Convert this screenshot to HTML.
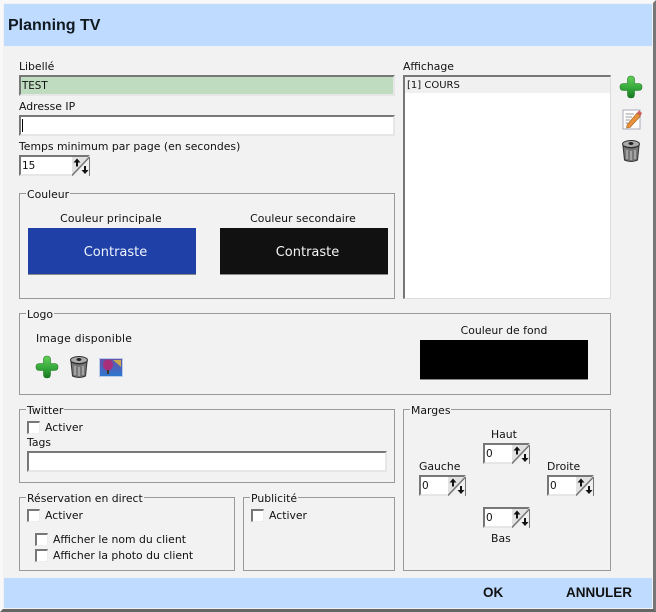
<!DOCTYPE html>
<html><head><meta charset="utf-8"><style>
html,body{margin:0;padding:0}
body{width:656px;height:612px;position:relative;overflow:hidden;background:#f2f2f2;font-family:"DejaVu Sans","Liberation Sans",sans-serif;font-size:10.85px;color:#111}
div{position:absolute;box-sizing:border-box;white-space:nowrap}
.t{line-height:16px;height:14px}
.bar{background:#bfdbff;left:4px;width:648px}
.inp{background:#fff;border:2px solid #777;border-right:2px solid #e6e6e6;border-bottom:2px solid #e6e6e6;line-height:19px;padding-left:1px;font-size:10.3px}
.grp{border:1px solid #999}
.lg{background:#f2f2f2;line-height:14px;height:12px;padding:0 1px}
.cb{width:13px;height:13px;background:#fff;border:1px solid #eee;border-top:2px solid #777;border-left:2px solid #777}
.sp{height:21px;width:47px;background:#fff;border:2px solid #777;border-right:2px solid #e6e6e6;border-bottom:2px solid #e6e6e6;font-size:10.5px;line-height:19px;padding-left:1px}
.sp svg{position:absolute;right:-2px;top:0}
svg.i{position:absolute}
.col{text-align:center;line-height:49px;font-size:13px;height:47px;width:168px;padding-left:7px;color:#f0f4ff;border-bottom:1px solid #888}
.btn{font:bold 13.5px/16px "Liberation Sans",sans-serif;color:#111;top:585px}
</style></head><body>
<div style="left:0;top:0;width:656px;height:612px;border:3px solid #fff;border-right:3px solid #777;border-bottom:3px solid #666;border-top-color:#f8f8f8;border-left-color:#f8f8f8"></div>
<div class="bar" style="top:4px;height:42px;font:bold 16px/44px 'Liberation Sans',sans-serif;padding-left:4px;color:#101820">Planning TV</div>
<div class="bar" style="top:578px;height:30px"></div>
<div class="btn" style="left:483px">OK</div>
<div class="btn" style="left:566px">ANNULER</div>

<div class="t" style="left:19px;top:59px">Libellé</div>
<div class="inp" style="left:19px;top:75px;width:376px;height:21px;background:#c0dcc0">TEST</div>
<div class="t" style="left:19px;top:99px">Adresse IP</div>
<div class="inp" style="left:19px;top:115px;width:376px;height:21px"><div style="left:1px;top:2px;width:1px;height:13px;background:#000"></div></div>
<div class="t" style="left:19px;top:139px">Temps minimum par page (en secondes)</div>
<div class="sp" style="left:19px;top:155px;width:71px">15<svg width="18" height="19" viewBox="0 0 18 19"><rect width="18" height="19" fill="#f0f0f0"/><path d="M0 19V0H17Z" fill="#e2e2e2"/><path d="M0 18.500L17 0.500" stroke="#777" stroke-width="1.500"/><path d="M17.500 0V19" stroke="#777"/><path d="M5 1.500L1.500 5.500H4V9.500H6V5.500H8.500ZM13 17L9.500 13H12V9H14V13H16.500Z" fill="#111"/></svg></div>

<div class="t" style="left:403px;top:59px">Affichage</div>
<div style="left:403px;top:75px;width:208px;height:224px;background:#fff;border:2px solid #777;border-right:1px solid #ddd;border-bottom:1px solid #ddd"></div>
<div style="left:405px;top:77px;width:205px;height:16px;background:#f0f0f0;line-height:18px;padding-left:2px;font-size:10px">[1] COURS</div>

<svg class="i" style="left:619px;top:75px" width="24" height="24" viewBox="0 0 24 24"><defs><linearGradient id="g1" x1="0" y1="0" x2="0" y2="1"><stop offset="0" stop-color="#63cf58"/><stop offset=".55" stop-color="#36a83a"/><stop offset="1" stop-color="#17761f"/></linearGradient></defs><path d="M8.500 4.500Q8.500 1 12 1Q15.500 1 15.500 4.500V8.500H19.500Q23 8.500 23 12Q23 15.500 19.500 15.500H15.500V19.500Q15.500 23 12 23Q8.500 23 8.500 19.500V15.500H4.500Q1 15.500 1 12Q1 8.500 4.500 8.500H8.500Z" fill="url(#g1)" stroke="#1f7a25" stroke-width=".6"/></svg>
<svg class="i" style="left:622px;top:108px" width="20" height="22" viewBox="0 0 20 22"><rect x="1" y="2" width="17" height="19" fill="#fff" stroke="#aab"/><path d="M3.500 6H12M3.500 9H10M3.500 12H8M3.500 15H6" stroke="#999"/><path d="M5 17L15 5L18.500 8L8 19.500L4.500 20Z" fill="#e8903a" stroke="#a06020" stroke-width=".6"/><path d="M15 5L17 2.500L20 5L18.500 8Z" fill="#d06060"/></svg>
<svg class="i" style="left:621px;top:139px" width="20" height="24" viewBox="0 0 20 24"><ellipse cx="10" cy="5" rx="8.500" ry="3.500" fill="#aaa" stroke="#333"/><ellipse cx="10" cy="4.500" rx="2.500" ry="1.500" fill="#222"/><path d="M2 7L3.500 21Q10 24 16.500 21L18 7Q10 11 2 7Z" fill="#777" stroke="#333"/><path d="M6 11V20M10 12V21M14 11V20" stroke="#bbb" stroke-width="1.300"/></svg>

<div class="grp" style="left:19px;top:193px;width:376px;height:106px"></div>
<div class="lg" style="left:26px;top:188px">Couleur</div>
<div class="t" style="left:27px;top:211px;width:168px;text-align:center;letter-spacing:.15px">Couleur principale</div>
<div class="t" style="left:219px;top:211px;width:168px;text-align:center;letter-spacing:.05px">Couleur secondaire</div>
<div class="col" style="left:28px;top:228px;background:#1f40a6">Contraste</div>
<div class="col" style="left:220px;top:228px;background:#111;color:#f5f5f5">Contraste</div>

<div class="grp" style="left:19px;top:313px;width:592px;height:82px"></div>
<div class="lg" style="left:26px;top:308px">Logo</div>
<div class="t" style="left:36px;top:331px;letter-spacing:.2px">Image disponible</div>
<div class="t" style="left:420px;top:323px;width:168px;text-align:center">Couleur de fond</div>
<div style="left:420px;top:340px;width:168px;height:40px;background:#000;border-bottom:1px solid #888"></div>
<svg class="i" style="left:35px;top:355px" width="24" height="24" viewBox="0 0 24 24"><defs><linearGradient id="g2" x1="0" y1="0" x2="0" y2="1"><stop offset="0" stop-color="#63cf58"/><stop offset=".55" stop-color="#36a83a"/><stop offset="1" stop-color="#17761f"/></linearGradient></defs><path d="M8.500 4.500Q8.500 1 12 1Q15.500 1 15.500 4.500V8.500H19.500Q23 8.500 23 12Q23 15.500 19.500 15.500H15.500V19.500Q15.500 23 12 23Q8.500 23 8.500 19.500V15.500H4.500Q1 15.500 1 12Q1 8.500 4.500 8.500H8.500Z" fill="url(#g2)" stroke="#1f7a25" stroke-width=".6"/></svg>
<svg class="i" style="left:69px;top:355px" width="20" height="24" viewBox="0 0 20 24"><ellipse cx="10" cy="5" rx="8.500" ry="3.500" fill="#aaa" stroke="#333"/><ellipse cx="10" cy="4.500" rx="2.500" ry="1.500" fill="#222"/><path d="M2 7L3.500 21Q10 24 16.500 21L18 7Q10 11 2 7Z" fill="#777" stroke="#333"/><path d="M6 11V20M10 12V21M14 11V20" stroke="#bbb" stroke-width="1.300"/></svg>
<svg class="i" style="left:99px;top:358px" width="24" height="19" viewBox="0 0 24 19"><defs><linearGradient id="g3" x1="0" y1="0" x2="0" y2="1"><stop offset="0" stop-color="#6a4fa8"/><stop offset="1" stop-color="#2b78d0"/></linearGradient></defs><rect x=".5" y=".5" width="23" height="18" fill="url(#g3)" stroke="#b8cbe8"/><path d="M14 2H22V9Z" fill="#c8a850"/><ellipse cx="9" cy="7" rx="5" ry="5.500" fill="#a8307a"/><path d="M8 12H10V16H8Z" fill="#432"/></svg>

<div class="grp" style="left:19px;top:409px;width:376px;height:74px"></div>
<div class="lg" style="left:26px;top:404px">Twitter</div>
<div class="cb" style="left:27px;top:421px"></div>
<div class="t" style="left:45px;top:420px">Activer</div>
<div class="t" style="left:27px;top:435px">Tags</div>
<div class="inp" style="left:27px;top:451px;width:360px;height:21px"></div>

<div class="grp" style="left:19px;top:497px;width:216px;height:74px"></div>
<div class="lg" style="left:26px;top:492px">Réservation en direct</div>
<div class="cb" style="left:27px;top:509px"></div>
<div class="t" style="left:45px;top:508px">Activer</div>
<div class="cb" style="left:35px;top:533px"></div>
<div class="t" style="left:53px;top:532px">Afficher le nom du client</div>
<div class="cb" style="left:35px;top:549px"></div>
<div class="t" style="left:53px;top:548px">Afficher la photo du client</div>

<div class="grp" style="left:243px;top:497px;width:152px;height:74px"></div>
<div class="lg" style="left:250px;top:492px">Publicité</div>
<div class="cb" style="left:251px;top:509px"></div>
<div class="t" style="left:269px;top:508px">Activer</div>

<div class="grp" style="left:403px;top:409px;width:208px;height:162px"></div>
<div class="lg" style="left:410px;top:404px">Marges</div>
<div class="t" style="left:491px;top:427px">Haut</div>
<div class="sp" style="left:483px;top:443px">0<svg width="18" height="19" viewBox="0 0 18 19"><rect width="18" height="19" fill="#f0f0f0"/><path d="M0 19V0H17Z" fill="#e2e2e2"/><path d="M0 18.500L17 0.500" stroke="#777" stroke-width="1.500"/><path d="M17.500 0V19" stroke="#777"/><path d="M5 1.500L1.500 5.500H4V9.500H6V5.500H8.500ZM13 17L9.500 13H12V9H14V13H16.500Z" fill="#111"/></svg></div>
<div class="t" style="left:419px;top:459px">Gauche</div>
<div class="sp" style="left:419px;top:475px">0<svg width="18" height="19" viewBox="0 0 18 19"><rect width="18" height="19" fill="#f0f0f0"/><path d="M0 19V0H17Z" fill="#e2e2e2"/><path d="M0 18.500L17 0.500" stroke="#777" stroke-width="1.500"/><path d="M17.500 0V19" stroke="#777"/><path d="M5 1.500L1.500 5.500H4V9.500H6V5.500H8.500ZM13 17L9.500 13H12V9H14V13H16.500Z" fill="#111"/></svg></div>
<div class="t" style="left:547px;top:459px">Droite</div>
<div class="sp" style="left:547px;top:475px">0<svg width="18" height="19" viewBox="0 0 18 19"><rect width="18" height="19" fill="#f0f0f0"/><path d="M0 19V0H17Z" fill="#e2e2e2"/><path d="M0 18.500L17 0.500" stroke="#777" stroke-width="1.500"/><path d="M17.500 0V19" stroke="#777"/><path d="M5 1.500L1.500 5.500H4V9.500H6V5.500H8.500ZM13 17L9.500 13H12V9H14V13H16.500Z" fill="#111"/></svg></div>
<div class="sp" style="left:483px;top:507px">0<svg width="18" height="19" viewBox="0 0 18 19"><rect width="18" height="19" fill="#f0f0f0"/><path d="M0 19V0H17Z" fill="#e2e2e2"/><path d="M0 18.500L17 0.500" stroke="#777" stroke-width="1.500"/><path d="M17.500 0V19" stroke="#777"/><path d="M5 1.500L1.500 5.500H4V9.500H6V5.500H8.500ZM13 17L9.500 13H12V9H14V13H16.500Z" fill="#111"/></svg></div>
<div class="t" style="left:491px;top:531px">Bas</div>
</body></html>
